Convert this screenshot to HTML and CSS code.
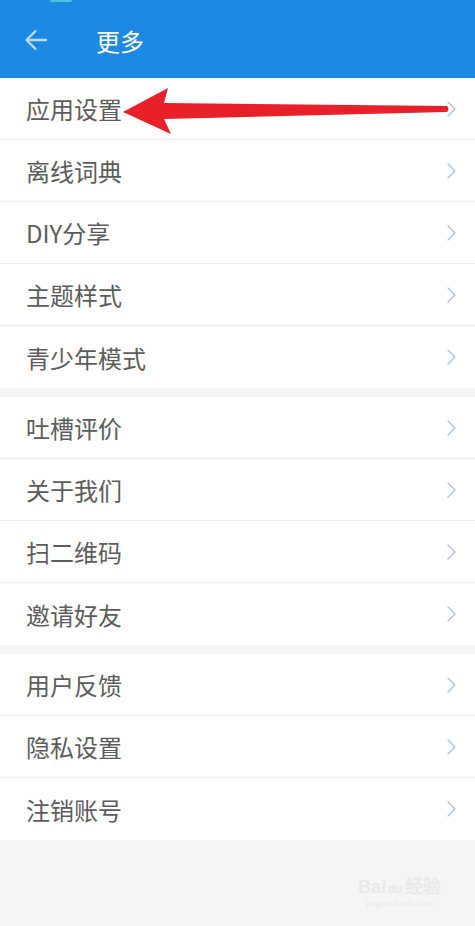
FILE: index.html
```html
<!DOCTYPE html>
<html lang="zh-CN">

<head>
    <meta charset="UTF-8">
    <meta name="viewport" content="width=device-width, initial-scale=1.0">
    <title>更多</title>
    <link rel="stylesheet" href="styles.css">
</head>

<body>
    <div class="status-dot"></div>
    <div id="header">
        <svg class="back" width="24" height="24" viewBox="0 0 24 24">
            <path d="M22 12H3M11.5 3L2.5 12l9 9" fill="none" stroke="#b8dcfa" stroke-width="2.3" stroke-linecap="round" stroke-linejoin="round"/>
        </svg>
        <span class="title">更多</span>
    </div>

    <div class="group">
        <div class="row"><span>应用设置</span><svg class="chev" width="9" height="16" viewBox="0 0 9 16"><path d="M1 1l7 7-7 7"/></svg></div>
        <div class="row"><span>离线词典</span><svg class="chev" width="9" height="16" viewBox="0 0 9 16"><path d="M1 1l7 7-7 7"/></svg></div>
        <div class="row"><span>DIY分享</span><svg class="chev" width="9" height="16" viewBox="0 0 9 16"><path d="M1 1l7 7-7 7"/></svg></div>
        <div class="row"><span>主题样式</span><svg class="chev" width="9" height="16" viewBox="0 0 9 16"><path d="M1 1l7 7-7 7"/></svg></div>
        <div class="row"><span>青少年模式</span><svg class="chev" width="9" height="16" viewBox="0 0 9 16"><path d="M1 1l7 7-7 7"/></svg></div>
    </div>

    <div class="group">
        <div class="row"><span>吐槽评价</span><svg class="chev" width="9" height="16" viewBox="0 0 9 16"><path d="M1 1l7 7-7 7"/></svg></div>
        <div class="row"><span>关于我们</span><svg class="chev" width="9" height="16" viewBox="0 0 9 16"><path d="M1 1l7 7-7 7"/></svg></div>
        <div class="row"><span>扫二维码</span><svg class="chev" width="9" height="16" viewBox="0 0 9 16"><path d="M1 1l7 7-7 7"/></svg></div>
        <div class="row"><span>邀请好友</span><svg class="chev" width="9" height="16" viewBox="0 0 9 16"><path d="M1 1l7 7-7 7"/></svg></div>
    </div>

    <div class="group">
        <div class="row"><span>用户反馈</span><svg class="chev" width="9" height="16" viewBox="0 0 9 16"><path d="M1 1l7 7-7 7"/></svg></div>
        <div class="row"><span>隐私设置</span><svg class="chev" width="9" height="16" viewBox="0 0 9 16"><path d="M1 1l7 7-7 7"/></svg></div>
        <div class="row"><span>注销账号</span><svg class="chev" width="9" height="16" viewBox="0 0 9 16"><path d="M1 1l7 7-7 7"/></svg></div>
    </div>

    <!-- red annotation arrow -->
    <svg class="annot" width="475" height="60" viewBox="0 0 475 60">
        <path d="M123 34 L168 10 L164 25 L447 28 Q450 31 447 34 L164 41 L171 56 Z" fill="#e8202a"/>
    </svg>

    <div class="mark">
        <div class="mark-top">Bai<span class="paw">du</span>经验</div>
        <div class="mark-url">jingyan.baidu.com</div>
    </div>
</body>

</html>
```

FILE: styles.css
```css
* {
    box-sizing: border-box;
}

body {
    margin: 0;
    background-color: #f5f5f5;
    font-family: "Noto Sans CJK SC", "Noto Sans", sans-serif;
    position: relative;
    min-height: 926px;
}

#header {
    height: 78px;
    background-color: #1e88e5;
    display: flex;
    align-items: center;
    padding-left: 24px;
}

.back {
    margin-top: 2px;
}

.title {
    color: #fff;
    font-size: 24px;
    margin-left: 48px;
    margin-top: 2px;
}

.status-dot {
    position: absolute;
    top: 0;
    left: 50px;
    width: 22px;
    height: 2px;
    background-color: #4fc3d9;
    border-radius: 0 0 3px 3px;
    z-index: 2;
}

.group {
    background-color: #fff;
    margin-bottom: 9px;
}

.row {
    height: 62px;
    display: flex;
    align-items: center;
    justify-content: space-between;
    padding: 0 19px 0 26px;
    border-bottom: 1px solid #eeeeee;
    color: #5c5c5c;
    font-size: 24px;
}

.row:last-child {
    border-bottom: none;
}

.chev path {
    fill: none;
    stroke: #a9c2da;
    stroke-width: 1.4;
    stroke-linecap: round;
    stroke-linejoin: round;
}

.annot {
    position: absolute;
    left: 0;
    top: 78px;
}

.mark {
    position: absolute;
    left: 358px;
    top: 872px;
    color: #e8e8e8;
    text-align: center;
    font-family: "Liberation Sans", sans-serif;
}

.mark-top {
    font-size: 18px;
    font-weight: bold;
}

.paw {
    font-size: 12px;
    margin: 0 2px;
}

.mark-url {
    font-size: 9px;
    font-family: "Liberation Serif", serif;
}
```
